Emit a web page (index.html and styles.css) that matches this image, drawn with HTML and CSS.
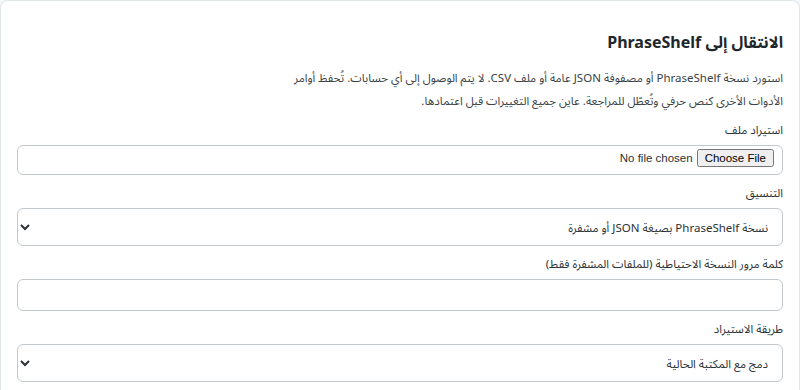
FILE: index.html
```html
<!DOCTYPE html>
<html lang="ar" dir="rtl">
<head>
<meta charset="utf-8">
<link rel="stylesheet" href="styles.css">
</head>
<body>
<section class="card">
  <h2 class="title">الانتقال إلى PhraseShelf</h2>
  <p class="desc">استورد نسخة PhraseShelf أو مصفوفة JSON عامة أو ملف CSV. لا يتم الوصول إلى أي حسابات. تُحفظ أوامر الأدوات الأخرى كنص حرفي وتُعطّل للمراجعة. عاين جميع التغييرات قبل اعتمادها.</p>
  <div class="fields">
    <label class="field">
      <span class="label">استيراد ملف</span>
      <input class="control file" type="file">
    </label>
    <label class="field">
      <span class="label">التنسيق</span>
      <select class="control select">
        <option>نسخة PhraseShelf بصيغة JSON أو مشفرة</option>
      </select>
    </label>
    <label class="field">
      <span class="label">كلمة مرور النسخة الاحتياطية (للملفات المشفرة فقط)</span>
      <input class="control text" type="password">
    </label>
    <label class="field">
      <span class="label">طريقة الاستيراد</span>
      <select class="control select">
        <option>دمج مع المكتبة الحالية</option>
      </select>
    </label>
  </div>
</section>
</body>
</html>
```

FILE: styles.css
```css
html, body {
  margin: 0;
  padding: 0;
  background: #f4f6f7;
}
body {
  font-family: "Noto Sans", "Noto Sans Arabic", sans-serif;
  color: #2b3236;
}
.card {
  background: #ffffff;
  border: 1px solid #e1e6e9;
  border-radius: 8px;
  padding: 16px 16px 24px;
  min-height: 400px;
}
.title {
  font-size: 16px;
  line-height: 24px;
  font-weight: 700;
  color: #1d272c;
  margin: 13px 0 12px;
}
.desc {
  font-size: 11.5px;
  line-height: 23px;
  color: #3a4246;
  margin: 0 0 8px;
  max-width: 505px;
}
.fields {
  display: flex;
  flex-direction: column;
  gap: 8px;
}
.field {
  display: flex;
  flex-direction: column;
  gap: 5px;
}
.label {
  font-size: 11.5px;
  line-height: 20px;
  color: #2b3236;
}
.control {
  box-sizing: border-box;
  width: 100%;
  border: 1px solid #c3c8cc;
  border-radius: 6px;
  background: #fff;
  font-family: "Noto Sans", "Noto Sans Arabic", sans-serif;
  font-size: 11.5px;
  color: #2b3236;
}
.file {
  height: 30px;
  padding: 3px 8px;
  font-family: "Liberation Sans", Arial, sans-serif;
  font-size: 11.5px;
}
.text {
  height: 32px;
  padding: 4px 8px;
}
.select {
  height: 38px;
  padding: 6px 10px;
}
```
